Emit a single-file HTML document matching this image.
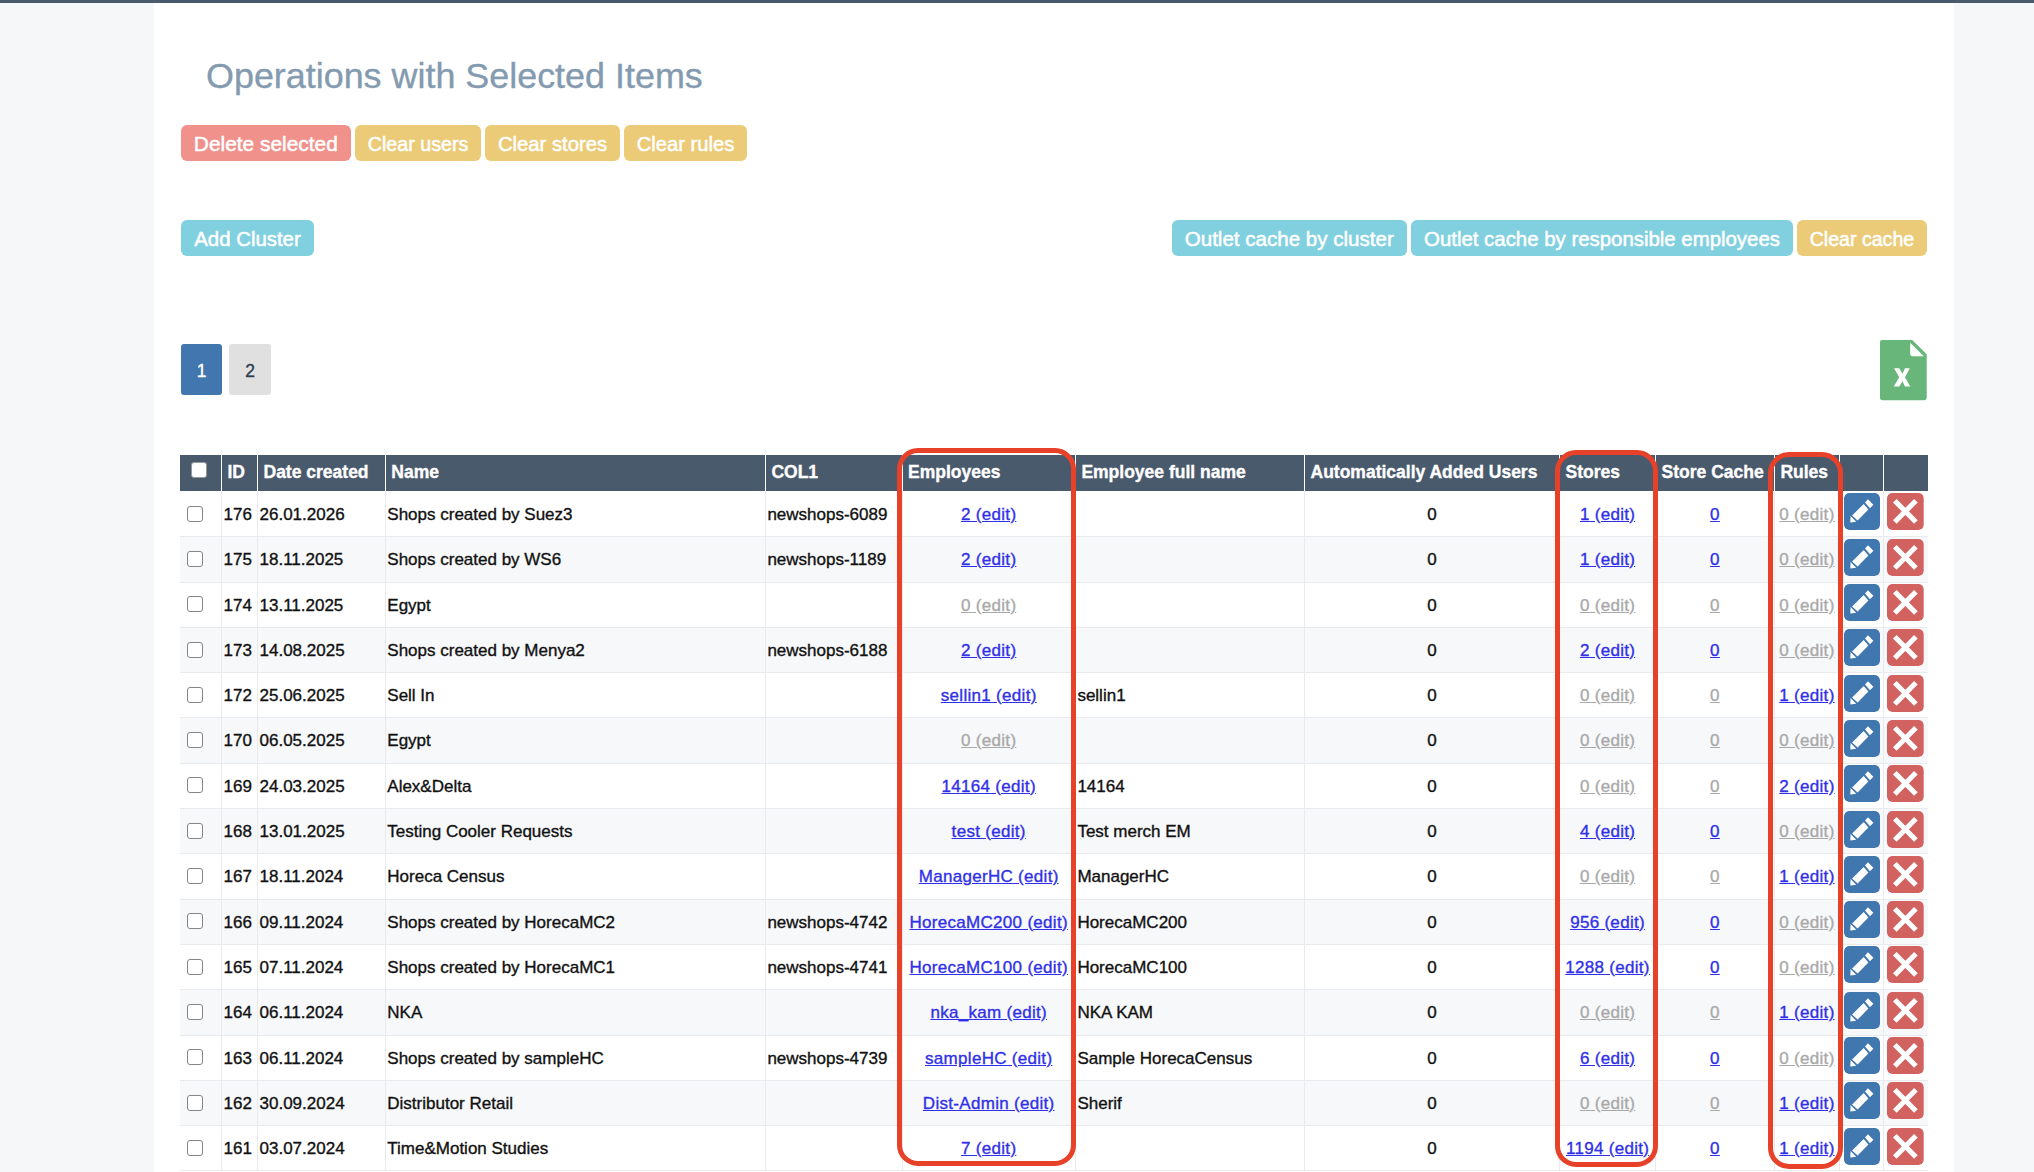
<!DOCTYPE html>
<html><head><meta charset="utf-8"><title>Clusters</title>
<style>
*{box-sizing:border-box}
html,body{margin:0;padding:0}
body{width:2034px;height:1172px;overflow:hidden;position:relative;background:#f6f7f9;font-family:"Liberation Sans",sans-serif;color:#111;-webkit-text-stroke:0.35px currentColor}
.topbar{position:absolute;left:0;top:0;width:2034px;height:3px;background:#4a5a6d}
.panel{position:absolute;left:154px;top:3px;width:1800px;height:1169px;background:#fff}
h1{position:absolute;margin:0;font-weight:normal;color:#839aaf;white-space:nowrap;line-height:1}
.btn{position:absolute;height:36px;border-radius:6px;color:#fff;text-align:center;white-space:nowrap;line-height:36px;padding-top:0.6px;-webkit-text-stroke:0.5px #fff}
.red{background:#f0918b}.yel{background:#ebcb78}.cyan{background:#81d0e0}
.pg{position:absolute;top:344px;height:51px;border-radius:3px;text-align:center;line-height:51px;padding-top:1.5px}
.hdr{position:absolute;top:455px;height:36px;background:#4a5a6d}
.th{position:absolute;top:0;height:36px;line-height:35.4px;color:#fff;font-weight:bold;white-space:nowrap;padding-left:6px}
.hsep{position:absolute;top:0;width:1px;height:36px;background:#fff}
.row{position:absolute;left:180px;width:1748px}
.row.alt{background:#f7f8fa}
.rsep{position:absolute;left:180px;width:1748px;height:1px;background:#e9eaed}
.vsep{position:absolute;width:1px;background:#e9eaed}
.td{position:absolute;top:0.5px;white-space:nowrap;padding-left:2px}
.c{text-align:center;padding-left:0}
a{text-decoration:underline;letter-spacing:0.3px}
a.b{color:#3030e8}
a.g{color:#a9a9a9}
.cb{position:absolute;width:16px;height:16px;border:1px solid #858585;border-radius:3px;background:#fff}
.ebtn{position:absolute;width:36px;height:37px;border-radius:5px}
.box{position:absolute;border:5px solid #e8412a;border-radius:21px}
</style></head><body>
<div class="topbar"></div>
<div class="panel"></div>
<h1 style="left:206px;top:59px;font-size:35.9px">Operations with Selected Items</h1>
<div class="btn red" style="left:181px;top:125px;width:169.7px;font-size:20.9px">Delete selected</div>
<div class="btn yel" style="left:355.1px;top:125px;width:125.9px;font-size:19.7px">Clear users</div>
<div class="btn yel" style="left:485.2px;top:125px;width:134.6px;font-size:20.25px">Clear stores</div>
<div class="btn yel" style="left:624.3px;top:125px;width:122.5px;font-size:20.2px">Clear rules</div>
<div class="btn cyan" style="left:181px;top:220px;width:133px;font-size:20.4px">Add Cluster</div>
<div class="btn cyan" style="left:1171.7px;top:220px;width:235.1px;font-size:20.55px">Outlet cache by cluster</div>
<div class="btn cyan" style="left:1411.2px;top:220px;width:381.6px;font-size:20.4px">Outlet cache by responsible employees</div>
<div class="btn yel" style="left:1797.1px;top:220px;width:129.7px;font-size:19.6px">Clear cache</div>
<div class="pg" style="left:181px;width:41px;background:#4177ae;color:#fff;font-size:17.5px">1</div>
<div class="pg" style="left:229px;width:42px;background:#e0e0e0;color:#2d3e50;font-size:17.5px">2</div>
<svg style="position:absolute;left:1880px;top:339.5px" width="47" height="61" viewBox="0 0 47 61">
<path d="M2 0 H32.2 L46.7 14.3 V57.5 Q46.7 60.3 44 60.3 H2.8 Q0 60.3 0 57.5 V2 Q0 0 2 0 Z" fill="#69b67a"/>
<path d="M30.2 2.7 L43.8 16.2 H33 Q30.2 16.2 30.2 13.4 Z" fill="#fff"/>
<path d="M14.1 28.3 H19.2 L22.5 33.8 L25 28.3 H29.8 L25 37.2 L30.2 46.4 H25 L22.5 41.3 L19.2 46.4 H13.8 L19.2 37.2 Z" fill="#fff"/>
</svg>
<div class="hdr" style="left:180px;width:1748px"></div>
<div class="th" style="left:221.5px;width:36px;font-size:17.5px;top:455px">ID</div>
<div class="th" style="left:257.5px;width:127.8px;font-size:17.5px;top:455px">Date created</div>
<div class="th" style="left:385.3px;width:380.1px;font-size:17.5px;top:455px">Name</div>
<div class="th" style="left:765.4px;width:136.6px;font-size:17.5px;top:455px">COL1</div>
<div class="th" style="left:902px;width:173.4px;font-size:17.5px;top:455px">Employees</div>
<div class="th" style="left:1075.4px;width:229.1px;font-size:17.5px;top:455px">Employee full name</div>
<div class="th" style="left:1304.5px;width:255px;font-size:17.5px;top:455px">Automatically Added Users</div>
<div class="th" style="left:1559.5px;width:96.1px;font-size:17.5px;top:455px">Stores</div>
<div class="th" style="left:1655.6px;width:118.8px;font-size:17.5px;top:455px">Store Cache</div>
<div class="th" style="left:1774.4px;width:65.1px;font-size:17.5px;top:455px">Rules</div>
<div class="hsep" style="left:221px;top:455px"></div>
<div class="hsep" style="left:257px;top:455px"></div>
<div class="hsep" style="left:384.8px;top:455px"></div>
<div class="hsep" style="left:764.9px;top:455px"></div>
<div class="hsep" style="left:901.5px;top:455px"></div>
<div class="hsep" style="left:1074.9px;top:455px"></div>
<div class="hsep" style="left:1304px;top:455px"></div>
<div class="hsep" style="left:1559px;top:455px"></div>
<div class="hsep" style="left:1655.1px;top:455px"></div>
<div class="hsep" style="left:1773.9px;top:455px"></div>
<div class="hsep" style="left:1839px;top:455px"></div>
<div class="hsep" style="left:1882.9px;top:455px"></div>
<div class="cb" style="left:191px;top:462px;width:16px;height:16px;border-color:#999"></div>
<div class="row" style="top:491.4px;height:45.3px"></div>
<div class="row alt" style="top:536.7px;height:45.3px"></div>
<div class="row" style="top:582.01px;height:45.3px"></div>
<div class="row alt" style="top:627.31px;height:45.3px"></div>
<div class="row" style="top:672.62px;height:45.3px"></div>
<div class="row alt" style="top:717.92px;height:45.3px"></div>
<div class="row" style="top:763.23px;height:45.3px"></div>
<div class="row alt" style="top:808.53px;height:45.3px"></div>
<div class="row" style="top:853.84px;height:45.3px"></div>
<div class="row alt" style="top:899.14px;height:45.3px"></div>
<div class="row" style="top:944.45px;height:45.3px"></div>
<div class="row alt" style="top:989.75px;height:45.3px"></div>
<div class="row" style="top:1035.06px;height:45.3px"></div>
<div class="row alt" style="top:1080.37px;height:45.3px"></div>
<div class="row" style="top:1125.67px;height:45.3px"></div>
<div class="rsep" style="top:536.2px"></div>
<div class="rsep" style="top:581.51px"></div>
<div class="rsep" style="top:626.81px"></div>
<div class="rsep" style="top:672.12px"></div>
<div class="rsep" style="top:717.42px"></div>
<div class="rsep" style="top:762.73px"></div>
<div class="rsep" style="top:808.03px"></div>
<div class="rsep" style="top:853.34px"></div>
<div class="rsep" style="top:898.64px"></div>
<div class="rsep" style="top:943.95px"></div>
<div class="rsep" style="top:989.25px"></div>
<div class="rsep" style="top:1034.56px"></div>
<div class="rsep" style="top:1079.87px"></div>
<div class="rsep" style="top:1125.17px"></div>
<div class="rsep" style="top:1170.47px"></div>
<div class="vsep" style="left:221px;top:491px;height:679.58px"></div>
<div class="vsep" style="left:257px;top:491px;height:679.58px"></div>
<div class="vsep" style="left:384.8px;top:491px;height:679.58px"></div>
<div class="vsep" style="left:764.9px;top:491px;height:679.58px"></div>
<div class="vsep" style="left:901.5px;top:491px;height:679.58px"></div>
<div class="vsep" style="left:1074.9px;top:491px;height:679.58px"></div>
<div class="vsep" style="left:1304px;top:491px;height:679.58px"></div>
<div class="vsep" style="left:1559px;top:491px;height:679.58px"></div>
<div class="vsep" style="left:1655.1px;top:491px;height:679.58px"></div>
<div class="vsep" style="left:1773.9px;top:491px;height:679.58px"></div>
<div class="vsep" style="left:1839px;top:491px;height:679.58px"></div>
<div class="vsep" style="left:1882.9px;top:491px;height:679.58px"></div>
<div style="position:absolute;left:0;top:491.4px;height:45.3px;width:2034px;font-size:17px;line-height:45.3px"><div class="cb" style="left:187px;top:14.25px"></div><div class="td" style="left:221.5px;width:36px;height:45.3px">176</div><div class="td" style="left:257.5px;width:127.8px;height:45.3px">26.01.2026</div><div class="td" style="left:385.3px;width:380.1px;height:45.3px">Shops created by Suez3</div><div class="td" style="left:765.4px;width:136.6px;height:45.3px">newshops-6089</div><div class="td c" style="left:902px;width:173.4px;height:45.3px"><a class="b">2 (edit)</a></div><div class="td c" style="left:1304.5px;width:255px;height:45.3px">0</div><div class="td c" style="left:1559.5px;width:96.1px;height:45.3px"><a class="b">1 (edit)</a></div><div class="td c" style="left:1655.6px;width:118.8px;height:45.3px"><a class="b">0</a></div><div class="td c" style="left:1774.4px;width:65.1px;height:45.3px"><a class="g">0 (edit)</a></div><svg class="ebtn" style="left:1843.8px;top:2px" width="36" height="37" viewBox="0 0 36 37"><rect width="36" height="37" rx="5" fill="#3f77ae"/><path d="M6.3 29.4 L6.6 23.1 L12.2 28.7 Z M8.1 22.4 L19.7 11.1 L24.4 16.5 L13.6 27.6 Z M21 9.5 L24 6.3 L29.4 11.8 L26 15.2 Z" fill="#fff"/></svg><svg class="ebtn" style="left:1887.2px;top:2px;width:36.7px" width="37" height="37" viewBox="0 0 36.7 37"><rect width="36.7" height="37" rx="5" fill="#d1625f"/><path d="M7.8 7.7 L28.9 29 M28.9 7.7 L7.8 29" stroke="#fff" stroke-width="5.1"/></svg></div>
<div style="position:absolute;left:0;top:536.7px;height:45.3px;width:2034px;font-size:17px;line-height:45.3px"><div class="cb" style="left:187px;top:14.25px"></div><div class="td" style="left:221.5px;width:36px;height:45.3px">175</div><div class="td" style="left:257.5px;width:127.8px;height:45.3px">18.11.2025</div><div class="td" style="left:385.3px;width:380.1px;height:45.3px">Shops created by WS6</div><div class="td" style="left:765.4px;width:136.6px;height:45.3px">newshops-1189</div><div class="td c" style="left:902px;width:173.4px;height:45.3px"><a class="b">2 (edit)</a></div><div class="td c" style="left:1304.5px;width:255px;height:45.3px">0</div><div class="td c" style="left:1559.5px;width:96.1px;height:45.3px"><a class="b">1 (edit)</a></div><div class="td c" style="left:1655.6px;width:118.8px;height:45.3px"><a class="b">0</a></div><div class="td c" style="left:1774.4px;width:65.1px;height:45.3px"><a class="g">0 (edit)</a></div><svg class="ebtn" style="left:1843.8px;top:2px" width="36" height="37" viewBox="0 0 36 37"><rect width="36" height="37" rx="5" fill="#3f77ae"/><path d="M6.3 29.4 L6.6 23.1 L12.2 28.7 Z M8.1 22.4 L19.7 11.1 L24.4 16.5 L13.6 27.6 Z M21 9.5 L24 6.3 L29.4 11.8 L26 15.2 Z" fill="#fff"/></svg><svg class="ebtn" style="left:1887.2px;top:2px;width:36.7px" width="37" height="37" viewBox="0 0 36.7 37"><rect width="36.7" height="37" rx="5" fill="#d1625f"/><path d="M7.8 7.7 L28.9 29 M28.9 7.7 L7.8 29" stroke="#fff" stroke-width="5.1"/></svg></div>
<div style="position:absolute;left:0;top:582.01px;height:45.3px;width:2034px;font-size:17px;line-height:45.3px"><div class="cb" style="left:187px;top:14.25px"></div><div class="td" style="left:221.5px;width:36px;height:45.3px">174</div><div class="td" style="left:257.5px;width:127.8px;height:45.3px">13.11.2025</div><div class="td" style="left:385.3px;width:380.1px;height:45.3px">Egypt</div><div class="td c" style="left:902px;width:173.4px;height:45.3px"><a class="g">0 (edit)</a></div><div class="td c" style="left:1304.5px;width:255px;height:45.3px">0</div><div class="td c" style="left:1559.5px;width:96.1px;height:45.3px"><a class="g">0 (edit)</a></div><div class="td c" style="left:1655.6px;width:118.8px;height:45.3px"><a class="g">0</a></div><div class="td c" style="left:1774.4px;width:65.1px;height:45.3px"><a class="g">0 (edit)</a></div><svg class="ebtn" style="left:1843.8px;top:2px" width="36" height="37" viewBox="0 0 36 37"><rect width="36" height="37" rx="5" fill="#3f77ae"/><path d="M6.3 29.4 L6.6 23.1 L12.2 28.7 Z M8.1 22.4 L19.7 11.1 L24.4 16.5 L13.6 27.6 Z M21 9.5 L24 6.3 L29.4 11.8 L26 15.2 Z" fill="#fff"/></svg><svg class="ebtn" style="left:1887.2px;top:2px;width:36.7px" width="37" height="37" viewBox="0 0 36.7 37"><rect width="36.7" height="37" rx="5" fill="#d1625f"/><path d="M7.8 7.7 L28.9 29 M28.9 7.7 L7.8 29" stroke="#fff" stroke-width="5.1"/></svg></div>
<div style="position:absolute;left:0;top:627.31px;height:45.3px;width:2034px;font-size:17px;line-height:45.3px"><div class="cb" style="left:187px;top:14.25px"></div><div class="td" style="left:221.5px;width:36px;height:45.3px">173</div><div class="td" style="left:257.5px;width:127.8px;height:45.3px">14.08.2025</div><div class="td" style="left:385.3px;width:380.1px;height:45.3px">Shops created by Menya2</div><div class="td" style="left:765.4px;width:136.6px;height:45.3px">newshops-6188</div><div class="td c" style="left:902px;width:173.4px;height:45.3px"><a class="b">2 (edit)</a></div><div class="td c" style="left:1304.5px;width:255px;height:45.3px">0</div><div class="td c" style="left:1559.5px;width:96.1px;height:45.3px"><a class="b">2 (edit)</a></div><div class="td c" style="left:1655.6px;width:118.8px;height:45.3px"><a class="b">0</a></div><div class="td c" style="left:1774.4px;width:65.1px;height:45.3px"><a class="g">0 (edit)</a></div><svg class="ebtn" style="left:1843.8px;top:2px" width="36" height="37" viewBox="0 0 36 37"><rect width="36" height="37" rx="5" fill="#3f77ae"/><path d="M6.3 29.4 L6.6 23.1 L12.2 28.7 Z M8.1 22.4 L19.7 11.1 L24.4 16.5 L13.6 27.6 Z M21 9.5 L24 6.3 L29.4 11.8 L26 15.2 Z" fill="#fff"/></svg><svg class="ebtn" style="left:1887.2px;top:2px;width:36.7px" width="37" height="37" viewBox="0 0 36.7 37"><rect width="36.7" height="37" rx="5" fill="#d1625f"/><path d="M7.8 7.7 L28.9 29 M28.9 7.7 L7.8 29" stroke="#fff" stroke-width="5.1"/></svg></div>
<div style="position:absolute;left:0;top:672.62px;height:45.3px;width:2034px;font-size:17px;line-height:45.3px"><div class="cb" style="left:187px;top:14.25px"></div><div class="td" style="left:221.5px;width:36px;height:45.3px">172</div><div class="td" style="left:257.5px;width:127.8px;height:45.3px">25.06.2025</div><div class="td" style="left:385.3px;width:380.1px;height:45.3px">Sell In</div><div class="td c" style="left:902px;width:173.4px;height:45.3px"><a class="b">sellin1 (edit)</a></div><div class="td" style="left:1075.4px;width:229.1px;height:45.3px">sellin1</div><div class="td c" style="left:1304.5px;width:255px;height:45.3px">0</div><div class="td c" style="left:1559.5px;width:96.1px;height:45.3px"><a class="g">0 (edit)</a></div><div class="td c" style="left:1655.6px;width:118.8px;height:45.3px"><a class="g">0</a></div><div class="td c" style="left:1774.4px;width:65.1px;height:45.3px"><a class="b">1 (edit)</a></div><svg class="ebtn" style="left:1843.8px;top:2px" width="36" height="37" viewBox="0 0 36 37"><rect width="36" height="37" rx="5" fill="#3f77ae"/><path d="M6.3 29.4 L6.6 23.1 L12.2 28.7 Z M8.1 22.4 L19.7 11.1 L24.4 16.5 L13.6 27.6 Z M21 9.5 L24 6.3 L29.4 11.8 L26 15.2 Z" fill="#fff"/></svg><svg class="ebtn" style="left:1887.2px;top:2px;width:36.7px" width="37" height="37" viewBox="0 0 36.7 37"><rect width="36.7" height="37" rx="5" fill="#d1625f"/><path d="M7.8 7.7 L28.9 29 M28.9 7.7 L7.8 29" stroke="#fff" stroke-width="5.1"/></svg></div>
<div style="position:absolute;left:0;top:717.92px;height:45.3px;width:2034px;font-size:17px;line-height:45.3px"><div class="cb" style="left:187px;top:14.25px"></div><div class="td" style="left:221.5px;width:36px;height:45.3px">170</div><div class="td" style="left:257.5px;width:127.8px;height:45.3px">06.05.2025</div><div class="td" style="left:385.3px;width:380.1px;height:45.3px">Egypt</div><div class="td c" style="left:902px;width:173.4px;height:45.3px"><a class="g">0 (edit)</a></div><div class="td c" style="left:1304.5px;width:255px;height:45.3px">0</div><div class="td c" style="left:1559.5px;width:96.1px;height:45.3px"><a class="g">0 (edit)</a></div><div class="td c" style="left:1655.6px;width:118.8px;height:45.3px"><a class="g">0</a></div><div class="td c" style="left:1774.4px;width:65.1px;height:45.3px"><a class="g">0 (edit)</a></div><svg class="ebtn" style="left:1843.8px;top:2px" width="36" height="37" viewBox="0 0 36 37"><rect width="36" height="37" rx="5" fill="#3f77ae"/><path d="M6.3 29.4 L6.6 23.1 L12.2 28.7 Z M8.1 22.4 L19.7 11.1 L24.4 16.5 L13.6 27.6 Z M21 9.5 L24 6.3 L29.4 11.8 L26 15.2 Z" fill="#fff"/></svg><svg class="ebtn" style="left:1887.2px;top:2px;width:36.7px" width="37" height="37" viewBox="0 0 36.7 37"><rect width="36.7" height="37" rx="5" fill="#d1625f"/><path d="M7.8 7.7 L28.9 29 M28.9 7.7 L7.8 29" stroke="#fff" stroke-width="5.1"/></svg></div>
<div style="position:absolute;left:0;top:763.23px;height:45.3px;width:2034px;font-size:17px;line-height:45.3px"><div class="cb" style="left:187px;top:14.25px"></div><div class="td" style="left:221.5px;width:36px;height:45.3px">169</div><div class="td" style="left:257.5px;width:127.8px;height:45.3px">24.03.2025</div><div class="td" style="left:385.3px;width:380.1px;height:45.3px">Alex&amp;Delta</div><div class="td c" style="left:902px;width:173.4px;height:45.3px"><a class="b">14164 (edit)</a></div><div class="td" style="left:1075.4px;width:229.1px;height:45.3px">14164</div><div class="td c" style="left:1304.5px;width:255px;height:45.3px">0</div><div class="td c" style="left:1559.5px;width:96.1px;height:45.3px"><a class="g">0 (edit)</a></div><div class="td c" style="left:1655.6px;width:118.8px;height:45.3px"><a class="g">0</a></div><div class="td c" style="left:1774.4px;width:65.1px;height:45.3px"><a class="b">2 (edit)</a></div><svg class="ebtn" style="left:1843.8px;top:2px" width="36" height="37" viewBox="0 0 36 37"><rect width="36" height="37" rx="5" fill="#3f77ae"/><path d="M6.3 29.4 L6.6 23.1 L12.2 28.7 Z M8.1 22.4 L19.7 11.1 L24.4 16.5 L13.6 27.6 Z M21 9.5 L24 6.3 L29.4 11.8 L26 15.2 Z" fill="#fff"/></svg><svg class="ebtn" style="left:1887.2px;top:2px;width:36.7px" width="37" height="37" viewBox="0 0 36.7 37"><rect width="36.7" height="37" rx="5" fill="#d1625f"/><path d="M7.8 7.7 L28.9 29 M28.9 7.7 L7.8 29" stroke="#fff" stroke-width="5.1"/></svg></div>
<div style="position:absolute;left:0;top:808.53px;height:45.3px;width:2034px;font-size:17px;line-height:45.3px"><div class="cb" style="left:187px;top:14.25px"></div><div class="td" style="left:221.5px;width:36px;height:45.3px">168</div><div class="td" style="left:257.5px;width:127.8px;height:45.3px">13.01.2025</div><div class="td" style="left:385.3px;width:380.1px;height:45.3px">Testing Cooler Requests</div><div class="td c" style="left:902px;width:173.4px;height:45.3px"><a class="b">test (edit)</a></div><div class="td" style="left:1075.4px;width:229.1px;height:45.3px">Test merch EM</div><div class="td c" style="left:1304.5px;width:255px;height:45.3px">0</div><div class="td c" style="left:1559.5px;width:96.1px;height:45.3px"><a class="b">4 (edit)</a></div><div class="td c" style="left:1655.6px;width:118.8px;height:45.3px"><a class="b">0</a></div><div class="td c" style="left:1774.4px;width:65.1px;height:45.3px"><a class="g">0 (edit)</a></div><svg class="ebtn" style="left:1843.8px;top:2px" width="36" height="37" viewBox="0 0 36 37"><rect width="36" height="37" rx="5" fill="#3f77ae"/><path d="M6.3 29.4 L6.6 23.1 L12.2 28.7 Z M8.1 22.4 L19.7 11.1 L24.4 16.5 L13.6 27.6 Z M21 9.5 L24 6.3 L29.4 11.8 L26 15.2 Z" fill="#fff"/></svg><svg class="ebtn" style="left:1887.2px;top:2px;width:36.7px" width="37" height="37" viewBox="0 0 36.7 37"><rect width="36.7" height="37" rx="5" fill="#d1625f"/><path d="M7.8 7.7 L28.9 29 M28.9 7.7 L7.8 29" stroke="#fff" stroke-width="5.1"/></svg></div>
<div style="position:absolute;left:0;top:853.84px;height:45.3px;width:2034px;font-size:17px;line-height:45.3px"><div class="cb" style="left:187px;top:14.25px"></div><div class="td" style="left:221.5px;width:36px;height:45.3px">167</div><div class="td" style="left:257.5px;width:127.8px;height:45.3px">18.11.2024</div><div class="td" style="left:385.3px;width:380.1px;height:45.3px">Horeca Census</div><div class="td c" style="left:902px;width:173.4px;height:45.3px"><a class="b">ManagerHC (edit)</a></div><div class="td" style="left:1075.4px;width:229.1px;height:45.3px">ManagerHC</div><div class="td c" style="left:1304.5px;width:255px;height:45.3px">0</div><div class="td c" style="left:1559.5px;width:96.1px;height:45.3px"><a class="g">0 (edit)</a></div><div class="td c" style="left:1655.6px;width:118.8px;height:45.3px"><a class="g">0</a></div><div class="td c" style="left:1774.4px;width:65.1px;height:45.3px"><a class="b">1 (edit)</a></div><svg class="ebtn" style="left:1843.8px;top:2px" width="36" height="37" viewBox="0 0 36 37"><rect width="36" height="37" rx="5" fill="#3f77ae"/><path d="M6.3 29.4 L6.6 23.1 L12.2 28.7 Z M8.1 22.4 L19.7 11.1 L24.4 16.5 L13.6 27.6 Z M21 9.5 L24 6.3 L29.4 11.8 L26 15.2 Z" fill="#fff"/></svg><svg class="ebtn" style="left:1887.2px;top:2px;width:36.7px" width="37" height="37" viewBox="0 0 36.7 37"><rect width="36.7" height="37" rx="5" fill="#d1625f"/><path d="M7.8 7.7 L28.9 29 M28.9 7.7 L7.8 29" stroke="#fff" stroke-width="5.1"/></svg></div>
<div style="position:absolute;left:0;top:899.14px;height:45.3px;width:2034px;font-size:17px;line-height:45.3px"><div class="cb" style="left:187px;top:14.25px"></div><div class="td" style="left:221.5px;width:36px;height:45.3px">166</div><div class="td" style="left:257.5px;width:127.8px;height:45.3px">09.11.2024</div><div class="td" style="left:385.3px;width:380.1px;height:45.3px">Shops created by HorecaMC2</div><div class="td" style="left:765.4px;width:136.6px;height:45.3px">newshops-4742</div><div class="td c" style="left:902px;width:173.4px;height:45.3px"><a class="b">HorecaMC200 (edit)</a></div><div class="td" style="left:1075.4px;width:229.1px;height:45.3px">HorecaMC200</div><div class="td c" style="left:1304.5px;width:255px;height:45.3px">0</div><div class="td c" style="left:1559.5px;width:96.1px;height:45.3px"><a class="b">956 (edit)</a></div><div class="td c" style="left:1655.6px;width:118.8px;height:45.3px"><a class="b">0</a></div><div class="td c" style="left:1774.4px;width:65.1px;height:45.3px"><a class="g">0 (edit)</a></div><svg class="ebtn" style="left:1843.8px;top:2px" width="36" height="37" viewBox="0 0 36 37"><rect width="36" height="37" rx="5" fill="#3f77ae"/><path d="M6.3 29.4 L6.6 23.1 L12.2 28.7 Z M8.1 22.4 L19.7 11.1 L24.4 16.5 L13.6 27.6 Z M21 9.5 L24 6.3 L29.4 11.8 L26 15.2 Z" fill="#fff"/></svg><svg class="ebtn" style="left:1887.2px;top:2px;width:36.7px" width="37" height="37" viewBox="0 0 36.7 37"><rect width="36.7" height="37" rx="5" fill="#d1625f"/><path d="M7.8 7.7 L28.9 29 M28.9 7.7 L7.8 29" stroke="#fff" stroke-width="5.1"/></svg></div>
<div style="position:absolute;left:0;top:944.45px;height:45.3px;width:2034px;font-size:17px;line-height:45.3px"><div class="cb" style="left:187px;top:14.25px"></div><div class="td" style="left:221.5px;width:36px;height:45.3px">165</div><div class="td" style="left:257.5px;width:127.8px;height:45.3px">07.11.2024</div><div class="td" style="left:385.3px;width:380.1px;height:45.3px">Shops created by HorecaMC1</div><div class="td" style="left:765.4px;width:136.6px;height:45.3px">newshops-4741</div><div class="td c" style="left:902px;width:173.4px;height:45.3px"><a class="b">HorecaMC100 (edit)</a></div><div class="td" style="left:1075.4px;width:229.1px;height:45.3px">HorecaMC100</div><div class="td c" style="left:1304.5px;width:255px;height:45.3px">0</div><div class="td c" style="left:1559.5px;width:96.1px;height:45.3px"><a class="b">1288 (edit)</a></div><div class="td c" style="left:1655.6px;width:118.8px;height:45.3px"><a class="b">0</a></div><div class="td c" style="left:1774.4px;width:65.1px;height:45.3px"><a class="g">0 (edit)</a></div><svg class="ebtn" style="left:1843.8px;top:2px" width="36" height="37" viewBox="0 0 36 37"><rect width="36" height="37" rx="5" fill="#3f77ae"/><path d="M6.3 29.4 L6.6 23.1 L12.2 28.7 Z M8.1 22.4 L19.7 11.1 L24.4 16.5 L13.6 27.6 Z M21 9.5 L24 6.3 L29.4 11.8 L26 15.2 Z" fill="#fff"/></svg><svg class="ebtn" style="left:1887.2px;top:2px;width:36.7px" width="37" height="37" viewBox="0 0 36.7 37"><rect width="36.7" height="37" rx="5" fill="#d1625f"/><path d="M7.8 7.7 L28.9 29 M28.9 7.7 L7.8 29" stroke="#fff" stroke-width="5.1"/></svg></div>
<div style="position:absolute;left:0;top:989.75px;height:45.3px;width:2034px;font-size:17px;line-height:45.3px"><div class="cb" style="left:187px;top:14.25px"></div><div class="td" style="left:221.5px;width:36px;height:45.3px">164</div><div class="td" style="left:257.5px;width:127.8px;height:45.3px">06.11.2024</div><div class="td" style="left:385.3px;width:380.1px;height:45.3px">NKA</div><div class="td c" style="left:902px;width:173.4px;height:45.3px"><a class="b">nka_kam (edit)</a></div><div class="td" style="left:1075.4px;width:229.1px;height:45.3px">NKA KAM</div><div class="td c" style="left:1304.5px;width:255px;height:45.3px">0</div><div class="td c" style="left:1559.5px;width:96.1px;height:45.3px"><a class="g">0 (edit)</a></div><div class="td c" style="left:1655.6px;width:118.8px;height:45.3px"><a class="g">0</a></div><div class="td c" style="left:1774.4px;width:65.1px;height:45.3px"><a class="b">1 (edit)</a></div><svg class="ebtn" style="left:1843.8px;top:2px" width="36" height="37" viewBox="0 0 36 37"><rect width="36" height="37" rx="5" fill="#3f77ae"/><path d="M6.3 29.4 L6.6 23.1 L12.2 28.7 Z M8.1 22.4 L19.7 11.1 L24.4 16.5 L13.6 27.6 Z M21 9.5 L24 6.3 L29.4 11.8 L26 15.2 Z" fill="#fff"/></svg><svg class="ebtn" style="left:1887.2px;top:2px;width:36.7px" width="37" height="37" viewBox="0 0 36.7 37"><rect width="36.7" height="37" rx="5" fill="#d1625f"/><path d="M7.8 7.7 L28.9 29 M28.9 7.7 L7.8 29" stroke="#fff" stroke-width="5.1"/></svg></div>
<div style="position:absolute;left:0;top:1035.06px;height:45.3px;width:2034px;font-size:17px;line-height:45.3px"><div class="cb" style="left:187px;top:14.25px"></div><div class="td" style="left:221.5px;width:36px;height:45.3px">163</div><div class="td" style="left:257.5px;width:127.8px;height:45.3px">06.11.2024</div><div class="td" style="left:385.3px;width:380.1px;height:45.3px">Shops created by sampleHC</div><div class="td" style="left:765.4px;width:136.6px;height:45.3px">newshops-4739</div><div class="td c" style="left:902px;width:173.4px;height:45.3px"><a class="b">sampleHC (edit)</a></div><div class="td" style="left:1075.4px;width:229.1px;height:45.3px">Sample HorecaCensus</div><div class="td c" style="left:1304.5px;width:255px;height:45.3px">0</div><div class="td c" style="left:1559.5px;width:96.1px;height:45.3px"><a class="b">6 (edit)</a></div><div class="td c" style="left:1655.6px;width:118.8px;height:45.3px"><a class="b">0</a></div><div class="td c" style="left:1774.4px;width:65.1px;height:45.3px"><a class="g">0 (edit)</a></div><svg class="ebtn" style="left:1843.8px;top:2px" width="36" height="37" viewBox="0 0 36 37"><rect width="36" height="37" rx="5" fill="#3f77ae"/><path d="M6.3 29.4 L6.6 23.1 L12.2 28.7 Z M8.1 22.4 L19.7 11.1 L24.4 16.5 L13.6 27.6 Z M21 9.5 L24 6.3 L29.4 11.8 L26 15.2 Z" fill="#fff"/></svg><svg class="ebtn" style="left:1887.2px;top:2px;width:36.7px" width="37" height="37" viewBox="0 0 36.7 37"><rect width="36.7" height="37" rx="5" fill="#d1625f"/><path d="M7.8 7.7 L28.9 29 M28.9 7.7 L7.8 29" stroke="#fff" stroke-width="5.1"/></svg></div>
<div style="position:absolute;left:0;top:1080.37px;height:45.3px;width:2034px;font-size:17px;line-height:45.3px"><div class="cb" style="left:187px;top:14.25px"></div><div class="td" style="left:221.5px;width:36px;height:45.3px">162</div><div class="td" style="left:257.5px;width:127.8px;height:45.3px">30.09.2024</div><div class="td" style="left:385.3px;width:380.1px;height:45.3px">Distributor Retail</div><div class="td c" style="left:902px;width:173.4px;height:45.3px"><a class="b">Dist-Admin (edit)</a></div><div class="td" style="left:1075.4px;width:229.1px;height:45.3px">Sherif</div><div class="td c" style="left:1304.5px;width:255px;height:45.3px">0</div><div class="td c" style="left:1559.5px;width:96.1px;height:45.3px"><a class="g">0 (edit)</a></div><div class="td c" style="left:1655.6px;width:118.8px;height:45.3px"><a class="g">0</a></div><div class="td c" style="left:1774.4px;width:65.1px;height:45.3px"><a class="b">1 (edit)</a></div><svg class="ebtn" style="left:1843.8px;top:2px" width="36" height="37" viewBox="0 0 36 37"><rect width="36" height="37" rx="5" fill="#3f77ae"/><path d="M6.3 29.4 L6.6 23.1 L12.2 28.7 Z M8.1 22.4 L19.7 11.1 L24.4 16.5 L13.6 27.6 Z M21 9.5 L24 6.3 L29.4 11.8 L26 15.2 Z" fill="#fff"/></svg><svg class="ebtn" style="left:1887.2px;top:2px;width:36.7px" width="37" height="37" viewBox="0 0 36.7 37"><rect width="36.7" height="37" rx="5" fill="#d1625f"/><path d="M7.8 7.7 L28.9 29 M28.9 7.7 L7.8 29" stroke="#fff" stroke-width="5.1"/></svg></div>
<div style="position:absolute;left:0;top:1125.67px;height:45.3px;width:2034px;font-size:17px;line-height:45.3px"><div class="cb" style="left:187px;top:14.25px"></div><div class="td" style="left:221.5px;width:36px;height:45.3px">161</div><div class="td" style="left:257.5px;width:127.8px;height:45.3px">03.07.2024</div><div class="td" style="left:385.3px;width:380.1px;height:45.3px">Time&amp;Motion Studies</div><div class="td c" style="left:902px;width:173.4px;height:45.3px"><a class="b">7 (edit)</a></div><div class="td c" style="left:1304.5px;width:255px;height:45.3px">0</div><div class="td c" style="left:1559.5px;width:96.1px;height:45.3px"><a class="b">1194 (edit)</a></div><div class="td c" style="left:1655.6px;width:118.8px;height:45.3px"><a class="b">0</a></div><div class="td c" style="left:1774.4px;width:65.1px;height:45.3px"><a class="b">1 (edit)</a></div><svg class="ebtn" style="left:1843.8px;top:2px" width="36" height="37" viewBox="0 0 36 37"><rect width="36" height="37" rx="5" fill="#3f77ae"/><path d="M6.3 29.4 L6.6 23.1 L12.2 28.7 Z M8.1 22.4 L19.7 11.1 L24.4 16.5 L13.6 27.6 Z M21 9.5 L24 6.3 L29.4 11.8 L26 15.2 Z" fill="#fff"/></svg><svg class="ebtn" style="left:1887.2px;top:2px;width:36.7px" width="37" height="37" viewBox="0 0 36.7 37"><rect width="36.7" height="37" rx="5" fill="#d1625f"/><path d="M7.8 7.7 L28.9 29 M28.9 7.7 L7.8 29" stroke="#fff" stroke-width="5.1"/></svg></div>
<div class="box" style="left:897.3px;top:447.6px;width:178.8px;height:718.9px"></div>
<div class="box" style="left:1554.6px;top:450.3px;width:103.4px;height:716.7px"></div>
<div class="box" style="left:1767.9px;top:451.8px;width:75px;height:717px"></div>
</body></html>
